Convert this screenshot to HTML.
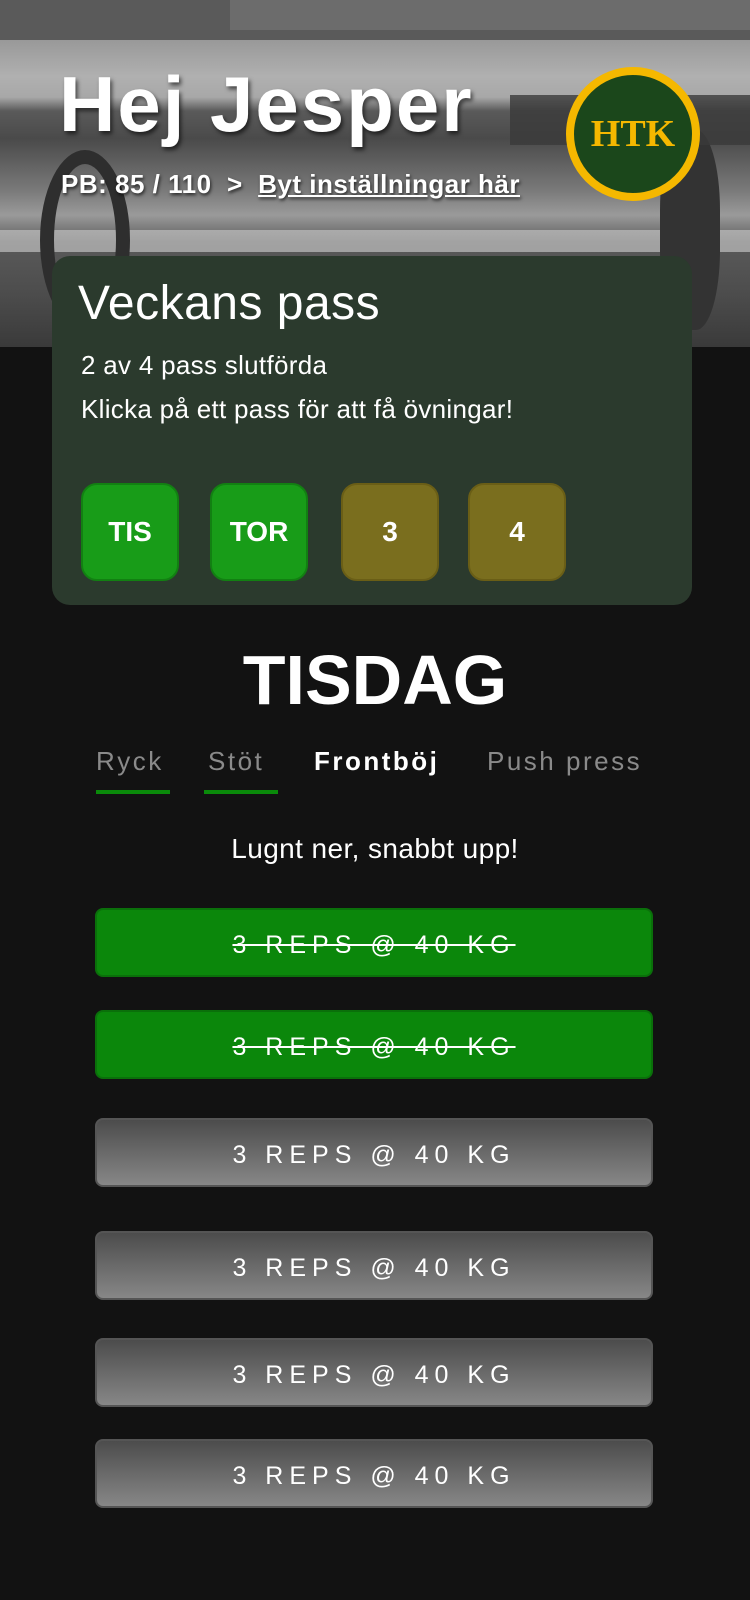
<!DOCTYPE html>
<html><head><meta charset="utf-8"><style>
*{margin:0;padding:0;box-sizing:border-box}
body{width:750px;height:1600px;background:#121212;font-family:"Liberation Sans",sans-serif;color:#fff;position:relative;overflow:hidden}
.bg{position:absolute;left:0;top:0;width:750px;height:347px;overflow:hidden;
background:linear-gradient(180deg,#6e6e6e 0,#9a9a9a 12%,#b0b0b0 22%,#a8a8a8 28%,#5a5a5a 32%,#4a4a4a 40%,#7a7a7a 55%,#9a9a9a 62%,#5a5a5a 70%,#4c4c4c 85%,#3a3a3a 100%)}
.abs{position:absolute}
.h1{left:59px;top:59px;font-size:78px;font-weight:bold;text-shadow:2px 3px 4px rgba(0,0,0,.6);letter-spacing:2px}
.pb{left:61px;top:169px;font-size:26px;font-weight:bold;text-shadow:1px 2px 3px rgba(0,0,0,.7);letter-spacing:.5px}
.pb u{text-decoration:underline}
.logo{left:566px;top:67px;width:134px;height:134px;border-radius:50%;background:#1b471b;border:8px solid #f5b800;color:#f5b800;font-family:"Liberation Serif",serif;font-weight:bold;font-size:38px;display:flex;align-items:center;justify-content:center}
.card{left:52px;top:256px;width:640px;height:349px;background:#2b3a2d;border-radius:18px}
.vt{left:78px;top:276px;font-size:48px;letter-spacing:.5px}
.l1{left:81px;top:350px;font-size:26px;letter-spacing:.3px}
.l2{left:81px;top:394px;font-size:26px;letter-spacing:.3px}
.btn{top:483px;width:98px;height:98px;border-radius:16px;display:flex;align-items:center;justify-content:center;font-size:28px;font-weight:bold}
.g{background:#189c18;border:2px solid #128012}
.o{background:#7a6e1e;border:2px solid #6a5e16}
.td{left:0;width:750px;top:640px;text-align:center;font-size:70px;font-weight:bold}
.tab{top:746px;font-size:26px;letter-spacing:2.5px;color:#8a8a8a}
.ul{top:790px;height:4px;background:#0a8a0a}
.lg{left:0;width:750px;top:833px;text-align:center;font-size:28px;letter-spacing:.4px}
.row{left:95px;width:558px;height:69px;border-radius:8px;display:flex;align-items:center;justify-content:center;font-size:25px;letter-spacing:6px;padding-top:6px}
.done{background:#0b870b;border:2px solid #0a700a;text-decoration:line-through}
.gr{background:linear-gradient(180deg,#4c4c4c,#878787);border:2px solid #555}
</style></head><body>
<div class="bg">
<div class="abs" style="left:0;top:0;width:750px;height:40px;background:#5a5a5a"></div>
<div class="abs" style="left:230px;top:0;width:520px;height:30px;background:#6c6c6c"></div>
<div class="abs" style="left:0;top:230px;width:750px;height:22px;background:#c0c0c0;opacity:.7"></div>
<div class="abs" style="left:40px;top:150px;width:90px;height:180px;border-radius:50%;border:14px solid #2e2e2e"></div>
<div class="abs" style="left:660px;top:130px;width:60px;height:200px;border-radius:40%;background:#333"></div>
<div class="abs" style="left:510px;top:95px;width:240px;height:50px;background:#3a3a3a;opacity:.8"></div>
</div>
<div class="abs h1">Hej Jesper</div>
<div class="abs pb">PB: 85 / 110 &nbsp;&gt;&nbsp; <u>Byt inställningar här</u></div>
<div class="abs logo">HTK</div>
<div class="abs card"></div>
<div class="abs vt">Veckans pass</div>
<div class="abs l1">2 av 4 pass slutförda</div>
<div class="abs l2">Klicka på ett pass för att få övningar!</div>
<div class="abs btn g" style="left:81px">TIS</div>
<div class="abs btn g" style="left:210px">TOR</div>
<div class="abs btn o" style="left:341px">3</div>
<div class="abs btn o" style="left:468px">4</div>
<div class="abs td">TISDAG</div>
<div class="abs tab" style="left:96px">Ryck</div>
<div class="abs tab" style="left:208px">Stöt</div>
<div class="abs tab" style="left:314px;color:#fff;font-weight:bold">Frontböj</div>
<div class="abs tab" style="left:487px">Push press</div>
<div class="abs ul" style="left:96px;width:74px"></div>
<div class="abs ul" style="left:204px;width:74px"></div>
<div class="abs lg">Lugnt ner, snabbt upp!</div>
<div class="abs row done" style="top:908px">3 REPS @ 40 KG</div>
<div class="abs row done" style="top:1010px">3 REPS @ 40 KG</div>
<div class="abs row gr" style="top:1118px">3 REPS @ 40 KG</div>
<div class="abs row gr" style="top:1231px">3 REPS @ 40 KG</div>
<div class="abs row gr" style="top:1338px">3 REPS @ 40 KG</div>
<div class="abs row gr" style="top:1439px">3 REPS @ 40 KG</div>
</body></html>
